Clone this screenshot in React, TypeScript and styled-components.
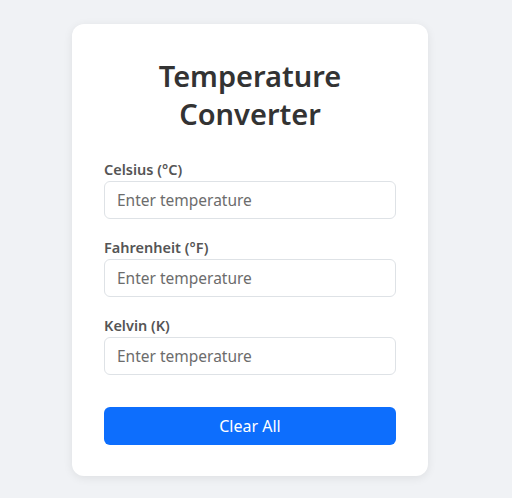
import React, { useState } from 'react'
import styled, { createGlobalStyle } from 'styled-components'

const GlobalStyle = createGlobalStyle`
	html, body {
		margin: 0;
		padding: 0;
		background: #f0f2f5;
		font-family: 'Noto Sans', 'Open Sans', sans-serif;
	}
	* {
		box-sizing: border-box;
	}
`

const Page = styled.div`
	display: flex;
	justify-content: flex-start;
	align-items: flex-start;
	min-height: 498px;
	padding: 24px 0 0 72px;
`

const Card = styled.div`
	width: 356px;
	background: #ffffff;
	padding: 33px 32px 31px;
	border-radius: 12px;
	box-shadow: 0 2px 10px rgba(0, 0, 0, 0.08);
`

const Title = styled.h2`
	margin: 0 0 23px;
	font-size: 29px;
	line-height: 38.4px;
	font-weight: 600;
	color: #333;
	text-align: center;
`

const Field = styled.div`
	display: flex;
	flex-direction: column;
	margin-bottom: 16px;
`

const Label = styled.label`
	font-size: 14.5px;
	line-height: 24px;
	font-weight: 600;
	color: #555;
`

const Input = styled.input`
	width: 100%;
	height: 38px;
	padding: 6px 12px;
	border: 1px solid #dee2e6;
	border-radius: 6px;
	font-family: inherit;
	font-size: 15.5px;
	color: #333;
	outline: none;
	&::placeholder {
		color: #6c6c6c;
	}
`

const Button = styled.button`
	width: 100%;
	height: 38px;
	margin-top: 16px;
	border: none;
	border-radius: 6px;
	background-color: #0d6efd;
	color: #fff;
	font-family: inherit;
	font-size: 16px;
	cursor: pointer;
`

const round = (n: number) => Math.round(n * 100) / 100

const App: React.FC = () => {
	const [c, setC] = useState('')
	const [f, setF] = useState('')
	const [k, setK] = useState('')

	const fromC = (v: string) => {
		setC(v)
		const n = parseFloat(v)
		if (isNaN(n)) {
			setF('')
			setK('')
			return
		}
		setF(String(round((n * 9) / 5 + 32)))
		setK(String(round(n + 273.15)))
	}

	const fromF = (v: string) => {
		setF(v)
		const n = parseFloat(v)
		if (isNaN(n)) {
			setC('')
			setK('')
			return
		}
		const cel = ((n - 32) * 5) / 9
		setC(String(round(cel)))
		setK(String(round(cel + 273.15)))
	}

	const fromK = (v: string) => {
		setK(v)
		const n = parseFloat(v)
		if (isNaN(n)) {
			setC('')
			setF('')
			return
		}
		const cel = n - 273.15
		setC(String(round(cel)))
		setF(String(round((cel * 9) / 5 + 32)))
	}

	const clearAll = () => {
		setC('')
		setF('')
		setK('')
	}

	return (
		<>
			<GlobalStyle />
			<Page>
				<Card>
					<Title>Temperature Converter</Title>
					<Field>
						<Label>Celsius (°C)</Label>
						<Input type="number" placeholder="Enter temperature" value={c} onChange={(e) => fromC(e.target.value)} />
					</Field>
					<Field>
						<Label>Fahrenheit (°F)</Label>
						<Input type="number" placeholder="Enter temperature" value={f} onChange={(e) => fromF(e.target.value)} />
					</Field>
					<Field>
						<Label>Kelvin (K)</Label>
						<Input type="number" placeholder="Enter temperature" value={k} onChange={(e) => fromK(e.target.value)} />
					</Field>
					<Button onClick={clearAll}>Clear All</Button>
				</Card>
			</Page>
		</>
	)
}

export default App
